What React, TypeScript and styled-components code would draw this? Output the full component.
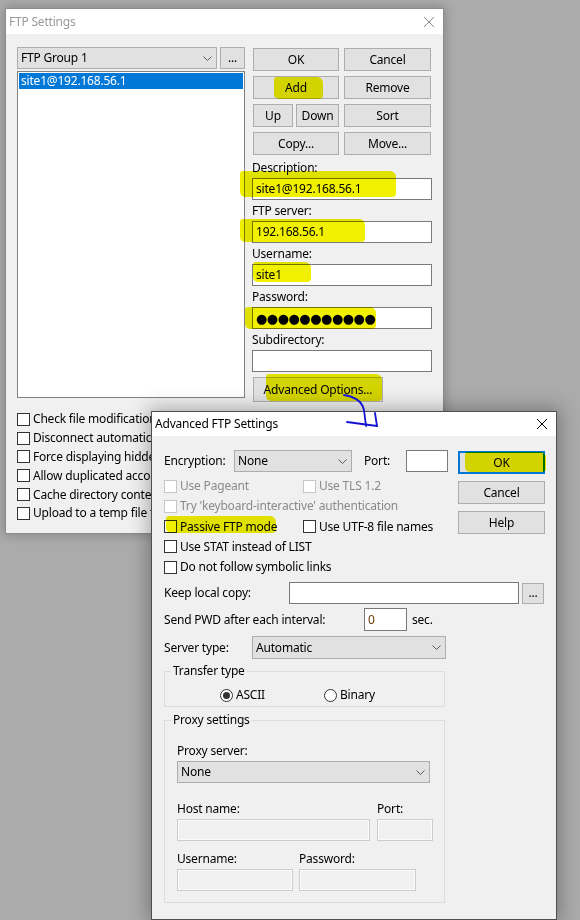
import styled, { createGlobalStyle, css } from "styled-components";

const GlobalStyle = createGlobalStyle`
  html, body {
    margin: 0;
    padding: 0;
    background: #ababab;
  }
  body {
    font-family: "Noto Sans", "Noto Sans CJK KR", sans-serif;
    font-size: 12px;
    line-height: 16px;
    letter-spacing: -0.2px;
    color: #000;
  }
`;

const Desktop = styled.div`
  position: relative;
  width: 580px;
  height: 920px;
  overflow: hidden;
  background: #ababab;
`;

const Window = styled.div<{ $x: number; $y: number; $w: number; $h: number; $active?: boolean }>`
  position: absolute;
  left: ${(p) => p.$x}px;
  top: ${(p) => p.$y}px;
  width: ${(p) => p.$w}px;
  height: ${(p) => p.$h}px;
  box-sizing: border-box;
  display: flex;
  flex-direction: column;
  background: #f0f0f0;
  border: 1px solid ${(p) => (p.$active ? "#4f4f4f" : "#8c8c8c")};
  box-shadow: ${(p) =>
    p.$active ? "0 0 18px 3px rgba(0, 0, 0, 0.3)" : "0 0 10px 1px rgba(0, 0, 0, 0.22)"};
`;

const TitleBar = styled.div<{ $h: number }>`
  flex: none;
  height: ${(p) => p.$h}px;
  background: #fff;
  display: flex;
  align-items: center;
  justify-content: space-between;
  padding: 0 9px 0 3px;
`;

const TitleText = styled.span<{ $active?: boolean }>`
  color: ${(p) => (p.$active ? "#000" : "#9a9a9a")};
  font-size: 12px;
`;

const Button = styled.div<{ $w?: number; $h?: number; $default?: boolean }>`
  box-sizing: border-box;
  flex: none;
  width: ${(p) => (p.$w ? `${p.$w}px` : "auto")};
  height: ${(p) => p.$h ?? 23}px;
  background: #e1e1e1;
  border: 1px solid #adadad;
  display: flex;
  align-items: center;
  justify-content: center;
  white-space: nowrap;
  ${(p) =>
    p.$default &&
    css`
      border: 2px solid #0078d7;
    `}
`;

const Combo = styled.div<{ $w: number; $h?: number }>`
  box-sizing: border-box;
  flex: none;
  width: ${(p) => p.$w}px;
  height: ${(p) => p.$h ?? 22}px;
  background: #e1e1e1;
  border: 1px solid #adadad;
  display: flex;
  align-items: center;
  justify-content: space-between;
  padding: 0 4px 0 3px;
  white-space: nowrap;
`;

const TextBox = styled.div<{ $w?: number; $h?: number; $disabled?: boolean; $color?: string }>`
  box-sizing: border-box;
  flex: none;
  width: ${(p) => (p.$w ? `${p.$w}px` : "100%")};
  height: ${(p) => p.$h ?? 22}px;
  background: ${(p) => (p.$disabled ? "#f0f0f0" : "#fff")};
  border: 1px solid ${(p) => (p.$disabled ? "#cccccc" : "#7a7a7a")};
  box-shadow: ${(p) => (p.$disabled ? "inset 0 0 0 1px #fbfbfb" : "none")};
  color: ${(p) => p.$color ?? "#000"};
  padding: 0 3px;
  display: flex;
  align-items: center;
  white-space: nowrap;
  overflow: hidden;
`;

const PasswordDots = styled.span`
  font-family: "DejaVu Sans", sans-serif;
  font-size: 13px;
  letter-spacing: -0.5px;
  line-height: 1;
`;

const CheckRow = styled.div<{ $disabled?: boolean; $h?: number }>`
  display: flex;
  align-items: center;
  gap: 3px;
  height: ${(p) => p.$h ?? 18.8}px;
  white-space: nowrap;
  color: ${(p) => (p.$disabled ? "#8a8a8a" : "#000")};
`;

const CheckBox = styled.span<{ $disabled?: boolean }>`
  box-sizing: border-box;
  flex: none;
  width: 13px;
  height: 13px;
  background: #fff;
  border: 1px solid ${(p) => (p.$disabled ? "#c6c6c6" : "#333")};
`;

const RadioRow = styled.div`
  display: flex;
  align-items: center;
  height: 22px;
  margin-top: 5px;
  padding-left: 43px;
`;

const RadioItem = styled.div<{ $w?: number }>`
  display: flex;
  align-items: center;
  gap: 3px;
  width: ${(p) => (p.$w ? `${p.$w}px` : "auto")};
`;

const RadioDot = styled.span<{ $checked?: boolean }>`
  box-sizing: border-box;
  width: 13px;
  height: 13px;
  border-radius: 50%;
  border: 1px solid #333;
  background: #fff;
  display: grid;
  place-items: center;
  &::after {
    content: "";
    width: 7px;
    height: 7px;
    border-radius: 50%;
    background: #333;
    display: ${(p) => (p.$checked ? "block" : "none")};
  }
`;

/* ---------- FTP Settings dialog ---------- */

const SettingsBody = styled.div`
  padding: 13px 0 0 11px;
`;

const SettingsMain = styled.div`
  display: flex;
  gap: 7px;
  align-items: flex-start;
`;

const SiteColumn = styled.div`
  width: 228px;
  display: flex;
  flex-direction: column;
  gap: 2px;
`;

const GroupRow = styled.div`
  display: flex;
  gap: 3px;
`;

const SiteList = styled.div`
  box-sizing: border-box;
  height: 327px;
  background: #fff;
  border: 1px solid #828282;
  padding: 1px;
`;

const SiteItem = styled.div<{ $selected?: boolean }>`
  height: 16px;
  line-height: 16px;
  padding-left: 2px;
  background: ${(p) => (p.$selected ? "#0078d7" : "transparent")};
  color: ${(p) => (p.$selected ? "#fff" : "#000")};
`;

const FieldColumn = styled.div`
  width: 180px;
  padding-top: 1px;
  display: flex;
  flex-direction: column;
`;

const ButtonGrid = styled.div`
  display: grid;
  grid-template-columns: 86px 87px;
  column-gap: 5px;
  row-gap: 5px;
  padding: 0 1px;
  margin-bottom: 2px;
`;

const SplitCell = styled.div`
  display: flex;
  gap: 3px;
  & > *:last-child {
    flex: 1;
  }
`;

const FieldLabel = styled.div<{ $h?: number }>`
  height: ${(p) => p.$h ?? 21}px;
  display: flex;
  align-items: center;
  white-space: nowrap;
`;

const AdvancedButtonWrap = styled.div`
  margin: 5px 0 0 1px;
`;

const OptionList = styled.div`
  margin-top: 8px;
  display: flex;
  flex-direction: column;
`;

/* ---------- Advanced FTP Settings dialog ---------- */

const AdvancedBody = styled.div`
  padding: 14px 11px 0 12px;
  display: flex;
  flex-direction: column;
`;

const TopSection = styled.div`
  display: flex;
  justify-content: space-between;
  align-items: flex-start;
`;

const OptionsArea = styled.div`
  display: flex;
  flex-direction: column;
`;

const InlineRow = styled.div<{ $mt?: number; $h?: number }>`
  display: flex;
  align-items: center;
  height: ${(p) => p.$h ?? 22}px;
  margin-top: ${(p) => p.$mt ?? 0}px;
`;

const InlineLabel = styled.div<{ $w: number; $ml?: number }>`
  flex: none;
  width: ${(p) => p.$w}px;
  margin-left: ${(p) => p.$ml ?? 0}px;
  white-space: nowrap;
`;

const CheckGrid = styled.div`
  margin-top: 4px;
  display: grid;
  grid-template-columns: 139px auto;
`;

const WideCell = styled.div`
  grid-column: 1 / 3;
`;

const DialogButtons = styled.div`
  width: 87px;
  padding-top: 1px;
  display: flex;
  flex-direction: column;
  gap: 7px;
`;

const Group = styled.fieldset<{ $mt: number }>`
  margin: ${(p) => p.$mt}px 0 0;
  width: 281px;
  box-sizing: border-box;
  border: 1px solid #dcdcdc;
  padding: 0 12px;
  min-width: 0;
`;

const GroupLegend = styled.legend`
  margin-left: -6px;
  padding: 0 2px;
  line-height: 16px;
`;

const GroupContent = styled.div<{ $pb?: number }>`
  display: flex;
  flex-direction: column;
  padding-bottom: ${(p) => p.$pb ?? 0}px;
`;

const FieldPair = styled.div<{ $gap: number; $mt?: number }>`
  display: flex;
  gap: ${(p) => p.$gap}px;
  margin-top: ${(p) => p.$mt ?? 0}px;
`;

const PairLabel = styled(FieldLabel)<{ $w?: number }>`
  width: ${(p) => (p.$w ? `${p.$w}px` : "auto")};
`;

/* ---------- annotations drawn over the screenshot ---------- */

const Highlight = styled.div<{ $x: number; $y: number; $w: number; $h: number }>`
  position: absolute;
  left: ${(p) => p.$x}px;
  top: ${(p) => p.$y}px;
  width: ${(p) => p.$w}px;
  height: ${(p) => p.$h}px;
  background: rgb(240, 240, 0);
  mix-blend-mode: multiply;
  border-radius: 3px 6px 4px 5px;
  pointer-events: none;
`;

const Overlay = styled.svg`
  position: absolute;
  left: 0;
  top: 0;
  pointer-events: none;
`;

const Chevron = () => (
  <svg width="9" height="5" viewBox="0 0 9 5">
    <polyline points="0.5,0.5 4.5,4.5 8.5,0.5" fill="none" stroke="#5a5a5a" strokeWidth="1" />
  </svg>
);

const CloseIcon = ({ color }: { color: string }) => (
  <svg width="10" height="10" viewBox="0 0 10 10">
    <path d="M0 0 L10 10 M10 0 L0 10" stroke={color} strokeWidth="1" />
  </svg>
);

const Check = ({ label, disabled }: { label: string; disabled?: boolean }) => (
  <CheckRow $disabled={disabled} $h={20.25}>
    <CheckBox $disabled={disabled} />
    {label}
  </CheckRow>
);

const settingsOptions = [
  "Check file modification time",
  "Disconnect automatically when idle",
  "Force displaying hidden files",
  "Allow duplicated accounts",
  "Cache directory contents",
  "Upload to a temp file first",
];

const highlights = [
  { x: 274, y: 77, w: 49, h: 22 },
  { x: 240, y: 171, w: 156, h: 26 },
  { x: 240, y: 219, w: 125, h: 23 },
  { x: 253, y: 262, w: 58, h: 20 },
  { x: 245, y: 307, w: 131, h: 22 },
  { x: 266, y: 374, w: 116, h: 27 },
  { x: 166, y: 516, w: 110, h: 17 },
  { x: 465, y: 452, w: 81, h: 20 },
];

const FtpSettings = () => (
  <Window $x={5} $y={8} $w={439} $h={526}>
    <TitleBar $h={25}>
      <TitleText>FTP Settings</TitleText>
      <CloseIcon color="#8a8a8a" />
    </TitleBar>
    <SettingsBody>
      <SettingsMain>
        <SiteColumn>
          <GroupRow>
            <Combo $w={200}>
              FTP Group 1
              <Chevron />
            </Combo>
            <Button $w={25} $h={22}>
              ...
            </Button>
          </GroupRow>
          <SiteList>
            <SiteItem $selected>site1@192.168.56.1</SiteItem>
          </SiteList>
        </SiteColumn>
        <FieldColumn>
          <ButtonGrid>
            <Button>OK</Button>
            <Button>Cancel</Button>
            <Button>Add</Button>
            <Button>Remove</Button>
            <SplitCell>
              <Button $w={40}>Up</Button>
              <Button>Down</Button>
            </SplitCell>
            <Button>Sort</Button>
            <Button>Copy...</Button>
            <Button>Move...</Button>
          </ButtonGrid>
          <FieldLabel>Description:</FieldLabel>
          <TextBox>site1@192.168.56.1</TextBox>
          <FieldLabel>FTP server:</FieldLabel>
          <TextBox>192.168.56.1</TextBox>
          <FieldLabel>Username:</FieldLabel>
          <TextBox>site1</TextBox>
          <FieldLabel>Password:</FieldLabel>
          <TextBox>
            <PasswordDots>●●●●●●●●●●●</PasswordDots>
          </TextBox>
          <FieldLabel>Subdirectory:</FieldLabel>
          <TextBox />
          <AdvancedButtonWrap>
            <Button $w={130} $h={25}>
              Advanced Options...
            </Button>
          </AdvancedButtonWrap>
        </FieldColumn>
      </SettingsMain>
      <OptionList>
        {settingsOptions.map((o) => (
          <CheckRow key={o}>
            <CheckBox />
            {o}
          </CheckRow>
        ))}
      </OptionList>
    </SettingsBody>
  </Window>
);

const AdvancedSettings = () => (
  <Window $x={151} $y={411} $w={406} $h={509} $active>
    <TitleBar $h={24}>
      <TitleText $active>Advanced FTP Settings</TitleText>
      <CloseIcon color="#000" />
    </TitleBar>
    <AdvancedBody>
      <TopSection>
        <OptionsArea>
          <InlineRow>
            <InlineLabel $w={70}>Encryption:</InlineLabel>
            <Combo $w={118}>
              None
              <Chevron />
            </Combo>
            <InlineLabel $w={42} $ml={12}>
              Port:
            </InlineLabel>
            <TextBox $w={42} />
          </InlineRow>
          <CheckGrid>
            <Check label="Use Pageant" disabled />
            <Check label="Use TLS 1.2" disabled />
            <WideCell>
              <Check label="Try 'keyboard-interactive' authentication" disabled />
            </WideCell>
            <Check label="Passive FTP mode" />
            <Check label="Use UTF-8 file names" />
            <WideCell>
              <Check label="Use STAT instead of LIST" />
            </WideCell>
            <WideCell>
              <Check label="Do not follow symbolic links" />
            </WideCell>
          </CheckGrid>
        </OptionsArea>
        <DialogButtons>
          <Button $default>OK</Button>
          <Button>Cancel</Button>
          <Button>Help</Button>
        </DialogButtons>
      </TopSection>

      <InlineRow $mt={5}>
        <InlineLabel $w={125}>Keep local copy:</InlineLabel>
        <TextBox $w={230} />
        <Button $w={22} $h={21} style={{ marginLeft: 3 }}>
          ...
        </Button>
      </InlineRow>
      <InlineRow $mt={4} $h={23}>
        <InlineLabel $w={200}>Send PWD after each interval:</InlineLabel>
        <TextBox $w={43} $h={23} $color="#6a3c08">
          0
        </TextBox>
        <InlineLabel $w={40} $ml={5}>
          sec.
        </InlineLabel>
      </InlineRow>
      <InlineRow $mt={5} $h={23}>
        <InlineLabel $w={88}>Server type:</InlineLabel>
        <Combo $w={194} $h={23}>
          Automatic
          <Chevron />
        </Combo>
      </InlineRow>

      <Group $mt={4}>
        <GroupLegend>Transfer type</GroupLegend>
        <RadioRow>
          <RadioItem $w={104}>
            <RadioDot $checked />
            ASCII
          </RadioItem>
          <RadioItem>
            <RadioDot />
            Binary
          </RadioItem>
        </RadioRow>
      </Group>

      <Group $mt={5}>
        <GroupLegend>Proxy settings</GroupLegend>
        <GroupContent $pb={11}>
          <FieldLabel style={{ marginTop: 12 }}>Proxy server:</FieldLabel>
          <Combo $w={253}>
            None
            <Chevron />
          </Combo>
          <FieldPair $gap={0} $mt={15}>
            <PairLabel $w={200}>Host name:</PairLabel>
            <PairLabel>Port:</PairLabel>
          </FieldPair>
          <FieldPair $gap={7}>
            <TextBox $w={193} $disabled />
            <TextBox $w={56} $disabled />
          </FieldPair>
          <FieldPair $gap={0} $mt={7}>
            <PairLabel $w={122}>Username:</PairLabel>
            <PairLabel>Password:</PairLabel>
          </FieldPair>
          <FieldPair $gap={6}>
            <TextBox $w={116} $disabled />
            <TextBox $w={117} $disabled />
          </FieldPair>
        </GroupContent>
      </Group>
    </AdvancedBody>
  </Window>
);

export default function App() {
  return (
    <>
      <GlobalStyle />
      <Desktop>
        <FtpSettings />
        <AdvancedSettings />
        {highlights.map((h, i) => (
          <Highlight key={i} $x={h.x} $y={h.y} $w={h.w} $h={h.h} />
        ))}
        <Overlay width="580" height="920" viewBox="0 0 580 920">
          <g fill="none" stroke="#1414d2" strokeWidth="1.8" strokeLinecap="round">
            <path d="M344 395 C352 396 362 400 364 410 L366 426" />
            <path d="M347 422 Q362 424 377 426" />
            <path d="M375 413 L377 426" />
          </g>
        </Overlay>
      </Desktop>
    </>
  );
}
